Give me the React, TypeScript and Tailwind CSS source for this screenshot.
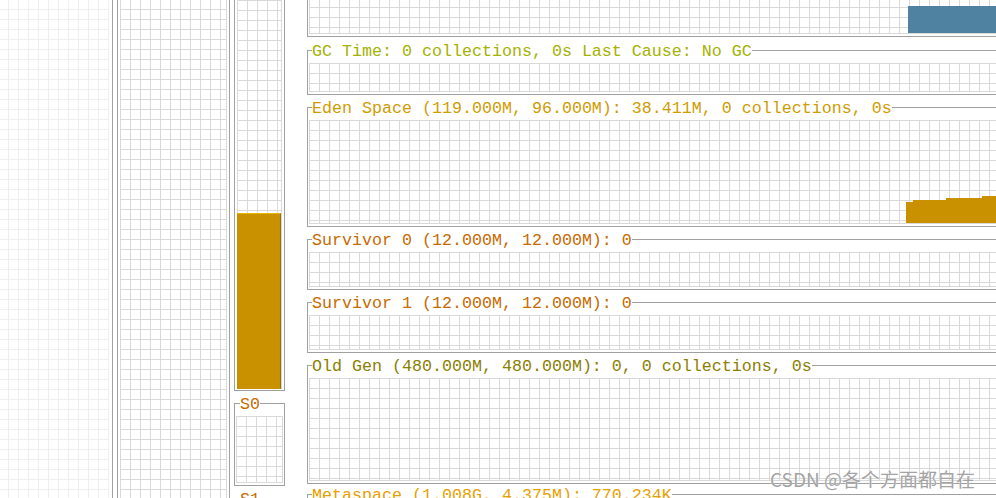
import React from "react";

const GRID =
  "bg-[linear-gradient(to_right,#d9d9d9_1px,transparent_1px),linear-gradient(to_bottom,#d9d9d9_1px,transparent_1px)] bg-[size:10px_10px]";
const LIGHT_GRID =
  "bg-[linear-gradient(to_right,#efefef_1px,transparent_1px),linear-gradient(to_bottom,#efefef_1px,transparent_1px)] bg-[size:10px_10px]";
const MONO = "font-['Liberation_Mono',monospace] text-[16.67px] leading-[16px] whitespace-nowrap";

function Section({
  title,
  color,
  gridH,
  mt,
  tick = "w-[4px]",
  children,
}: {
  title: string;
  color: string;
  gridH: string;
  mt: string;
  tick?: string;
  children?: React.ReactNode;
}) {
  return (
    <div className={`flex shrink-0 flex-col border-x border-b border-[#a0a0a0] ${mt}`}>
      <div className="-mt-[8px] flex h-[16px] shrink-0 items-center">
        <div className={`h-px shrink-0 bg-[#a0a0a0] ${tick}`} />
        <span className={`${MONO} ${color} translate-y-[2px]`}>{title}</span>
        <div className="h-px flex-1 bg-[#a0a0a0]" />
      </div>
      <div className="shrink-0 px-px pb-[2px] pt-[5px]">
        <div className={`relative overflow-hidden border-r border-b border-[#d9d9d9] ${GRID} ${gridH}`}>
          {children}
        </div>
      </div>
    </div>
  );
}

export default function App() {
  return (
    <div className="relative flex h-[498px] w-[996px] overflow-hidden bg-white">
      {/* column 1 (faded) */}
      <div className="h-full w-[113px] shrink-0 border-r border-[#a0a0a0] pr-[3px]">
        <div className={`h-full border-r border-[#efefef] ${LIGHT_GRID} bg-[position:8px_9px]`} />
      </div>

      {/* column 2 */}
      <div className="ml-[4px] h-full w-[113px] shrink-0 border-x border-[#a0a0a0] px-[2px]">
        <div className={`h-full border-r border-[#d9d9d9] ${GRID} bg-[position:0_9px]`} />
      </div>

      {/* column 3 */}
      <div className="ml-[4px] flex w-[51px] shrink-0 flex-col">
        <div className="h-[391px] shrink-0 border-x border-b border-[#a0a0a0] px-[2px] pb-[1px]">
          <div className={`flex h-full flex-col justify-end border-r border-[#d9d9d9] ${GRID} bg-[position:0_0]`}>
            <div className="h-[176px] shrink-0 border-t border-r border-t-[#e9b800] border-r-[#9c7000] bg-[#c99100]" />
          </div>
        </div>
        <Section title="S0" color="text-[#c86a00]" gridH="h-[67px]" mt="mt-[12px]" tick="w-[5px]" />
        <Section title="S1" color="text-[#c86a00]" gridH="h-[67px]" mt="mt-[12px]" tick="w-[5px]" />
      </div>

      {/* right graphs panel */}
      <div className="ml-[22px] flex w-[720px] shrink-0 flex-col">
        <Section
          title="Class Loader Time: 2005 loaded, 0 unloaded, 1.234s"
          color="text-[#4f82a0]"
          gridH="h-[37px]"
          mt="-mt-[16px]"
        >
          <div className="absolute bottom-0 left-[599px] top-[9px] w-[200px] bg-[#4f82a0]" />
        </Section>
        <Section
          title="GC Time: 0 collections, 0s Last Cause: No GC"
          color="text-[#a4b200]"
          gridH="h-[29px]"
          mt="mt-[13px]"
        />
        <Section
          title="Eden Space (119.000M, 96.000M): 38.411M, 0 collections, 0s"
          color="text-[#d09c00]"
          gridH="h-[104px]"
          mt="mt-[12px]"
        >
          <svg className="absolute left-[597px] top-0" width="120" height="104" viewBox="0 0 120 104">
            <polygon
              points="0,82 7,82 7,80 40,80 40,78 76,78 76,76 120,76 120,104 0,104"
              fill="#c99100"
            />
          </svg>
        </Section>
        <Section
          title="Survivor 0 (12.000M, 12.000M): 0"
          color="text-[#c86a00]"
          gridH="h-[35px]"
          mt="mt-[12px]"
        />
        <Section
          title="Survivor 1 (12.000M, 12.000M): 0"
          color="text-[#c86a00]"
          gridH="h-[35px]"
          mt="mt-[12px]"
        />
        <Section
          title="Old Gen (480.000M, 480.000M): 0, 0 collections, 0s"
          color="text-[#8b8000]"
          gridH="h-[103px]"
          mt="mt-[12px]"
        />
        <Section
          title="Metaspace (1.008G, 4.375M): 770.234K"
          color="text-[#e8a000]"
          gridH="h-[60px]"
          mt="mt-[10px]"
        />
      </div>

      {/* watermark */}
      <span className="absolute left-[770px] top-[467px] whitespace-nowrap font-['Noto_Sans_CJK_SC',sans-serif] text-[19px] leading-[24px] text-[#a3a3a3] [text-shadow:0_0_1px_#fff]">
        CSDN @各个方面都自在
      </span>
    </div>
  );
}
